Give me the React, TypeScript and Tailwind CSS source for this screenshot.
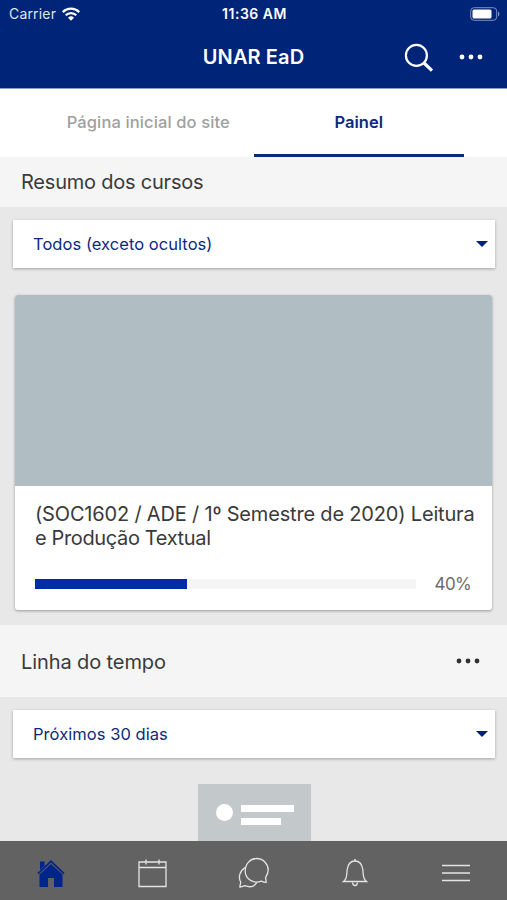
import type { ReactNode } from "react";

function Dots({ className }: { className: string }) {
  return (
    <svg className={className} width="24" height="6" viewBox="0 0 24 6" fill="currentColor">
      <circle cx="3" cy="3" r="2.4" />
      <circle cx="12" cy="3" r="2.4" />
      <circle cx="21" cy="3" r="2.4" />
    </svg>
  );
}

function Select({ children }: { children: ReactNode }) {
  return (
    <button className="mr-3 ml-[13px] flex h-[48.5px] items-center justify-between bg-white pr-[7px] pl-5 text-[16.5px] tracking-[0.05px] text-[#0c2a80] shadow-[0_1px_3px_rgba(0,0,0,0.3)]">
      <span className="pt-[1.5px]">{children}</span>
      <svg width="12" height="6" viewBox="0 0 12 6">
        <path d="M0 0h12L6 6z" fill="#00207a" />
      </svg>
    </button>
  );
}

export default function App() {
  return (
    <div className="flex h-[900px] w-[507px] flex-col overflow-hidden bg-[#e8e8e8] font-['Inter',sans-serif]">
      <header className="h-[89px] shrink-0 border-b border-[#8f9fc6] bg-[#002478] text-white">
        <div className="grid h-7 grid-cols-3 items-center pr-[7px] pl-[9px]">
          <div className="flex items-center gap-1.5 text-[14px] leading-none">
            <span className="tracking-[0.18px] text-[#dfe5f2]">Carrier</span>
            <svg width="18" height="14" viewBox="0 0 18 14" fill="none" stroke="white" strokeWidth="2.2">
              <path d="M.8 5.1a11.6 11.6 0 0 1 16.4 0" />
              <path d="M3.7 8.3a7.5 7.5 0 0 1 10.6 0" />
              <path d="M6 10.8a4.3 4.3 0 0 1 6 0L9 13.8z" fill="white" stroke="none" />
            </svg>
          </div>
          <span className="text-center text-[14px] leading-none font-semibold tracking-[0.5px] whitespace-nowrap">11:36 AM</span>
          <svg className="justify-self-end" width="30" height="14" viewBox="0 0 30 14">
            <rect x=".7" y=".7" width="26" height="12.6" rx="3.4" fill="none" stroke="#8090bd" />
            <rect x="2.5" y="2.5" width="19" height="9" rx="1.5" fill="white" />
            <path d="M28 4.5c2 1 2 4 0 5z" fill="#8090bd" />
          </svg>
        </div>
        <div className="grid h-[58px] grid-cols-[1fr_auto_1fr] items-center">
          <span />
          <h1 className="text-[20px] font-semibold tracking-[0.1px]">UNAR EaD</h1>
          <div className="flex items-center justify-end gap-[25px] pr-6">
            <svg className="mt-px" width="30" height="30" viewBox="0 0 30 30" fill="none" stroke="white">
              <circle cx="12.4" cy="12.4" r="10.5" strokeWidth="2.2" />
              <path d="M20 20l8 7.7" strokeWidth="3.2" />
            </svg>
            <Dots className="text-white" />
          </div>
        </div>
      </header>

      <nav className="flex h-[68px] shrink-0 bg-white px-[43px] text-[16.5px] font-medium">
        <div className="flex h-[66px] flex-1 items-center justify-center tracking-[0.12px] text-[#a0a0a0]">Página inicial do site</div>
        <div className="flex h-[68px] flex-1 items-center justify-center border-b-[3px] border-[#0c2a80] pt-[1.5px] font-semibold text-[#0c2a80]">
          Painel
        </div>
      </nav>

      <h2 className="flex h-[50px] shrink-0 items-center bg-[#f5f5f5] pl-[21px] text-[20px] tracking-[-0.22px] text-[#3a3a3a]">
        Resumo dos cursos
      </h2>

      <section className="flex h-[418px] shrink-0 flex-col pt-[12.5px]">
        <Select>Todos (exceto ocultos)</Select>
        <article className="mt-[27px] mr-[15px] ml-[15px] h-[315px] overflow-hidden rounded-[3px] bg-white shadow-[0_1px_3px_rgba(0,0,0,0.35)]">
          <div className="h-[190.5px] bg-[#b0bec3]" />
          <p className="pt-4 pl-5 text-[20px] leading-6 tracking-[-0.18px] whitespace-nowrap text-[#3a3a3a]">
            (SOC1602 / ADE / 1º Semestre de 2020) Leitura
            <br />
            <span className="tracking-[-0.36px]">e Produção Textual</span>
          </p>
          <div className="mt-[21px] flex items-center pl-5">
            <div className="h-2.5 w-[381px] bg-[#f5f5f5]">
              <div className="h-full w-2/5 bg-[#002da5]" />
            </div>
            <span className="ml-[18.5px] pt-[1px] text-[17px] tracking-[-0.6px] text-[#6c6c6c]">40%</span>
          </div>
        </article>
      </section>

      <div className="flex h-[72px] shrink-0 items-center justify-between bg-[#f5f5f5] pr-[27px] pl-[21px]">
        <h2 className="pt-[1.5px] text-[20px] tracking-[-0.1px] text-[#3a3a3a]">Linha do tempo</h2>
        <Dots className="text-[#303030]" />
      </div>

      <section className="flex h-36 shrink-0 flex-col pt-[12.5px]">
        <Select>Próximos 30 dias</Select>
        <div className="mt-[26px] ml-[198px] flex h-[57px] w-[113px] gap-2 bg-[#c3c9cb] pt-5 pl-[18px]">
          <span className="size-[17px] rounded-full bg-white" />
          <div className="flex flex-col gap-[6px] pt-[1px]">
            <span className="h-[7px] w-[53px] bg-white" />
            <span className="h-[7px] w-[40px] bg-white" />
          </div>
        </div>
      </section>

      <footer className="grid h-[59px] shrink-0 grid-cols-5 bg-[#626262] pt-4">
        <svg className="mx-auto" width="32" height="32" viewBox="0 .5 32 32" fill="#00258a">
          <path d="M2.5 16.5L16 3.5l13.5 13-1.2 1.2L16 6 3.7 17.7z" />
          <path d="M5 5h4.500v4.300L5 13.6zM16 7.500l11.500 10.500V30.500h-8.500V21.500h-6V30.500H4.500V18z" />
        </svg>
        <svg className="mx-auto" width="32" height="32" viewBox="-.5 0 32 32" fill="none" stroke="#e4e4e4" strokeWidth="1.3">
          <path d="M2.5 5h27v24.500h-27zM2.5 10.5h27M9.5 2.500v5M22.5 2.500v5" />
        </svg>
        <svg className="mx-auto" width="32" height="32" viewBox="-.7 0 32 32" fill="none" stroke="#e4e4e4" strokeWidth="1.3">
          <path d="M28.5 25.3c-2 .2-3.5-.6-5-1.2-7 3-16-1.5-16-10C7.500 7 12.500 1.500 19 1.500S30.500 7 30.500 13c0 3-1 5-2.600 7.300 0 2 .6 3 .6 5z" />
          <path d="M7.500 10.500c-6 4-7 10-4.500 14.500 0 1.500-.8 3-.8 5 2 0 3.200-.6 5-1.300 5 2 9.500 1 12-3.500" />
        </svg>
        <svg className="mx-auto" width="32" height="32" viewBox="0 0 32 32" fill="none" stroke="#e4e4e4" strokeWidth="1.3">
          <path d="M4.500 24.500c4-3 3-7 3.700-12C9 7 11.500 4 16 4s7 3 7.800 8.500c.7 5-.3 9 3.700 12z" />
          <path d="M13.500 25.500c.3 4 4.700 4 5 0M15 3h2" />
        </svg>
        <svg className="mx-auto" width="32" height="32" viewBox="0 0 32 32" fill="none" stroke="#e4e4e4" strokeWidth="1.5">
          <path d="M2 8.500h28M2 16h28M2 23.500h28" />
        </svg>
      </footer>
    </div>
  );
}
